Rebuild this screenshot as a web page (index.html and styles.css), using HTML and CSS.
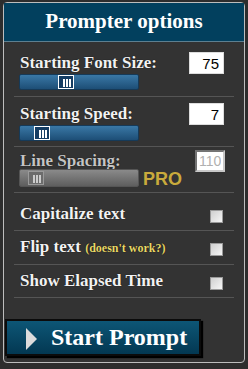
FILE: index.html
```html
<!DOCTYPE html>
<html lang="en">
  <head>
    <meta charset="UTF-8" />
    <meta name="viewport" content="width=device-width, initial-scale=1.0" />
    <title>Prompter options</title>
    <link rel="stylesheet" href="styles.css">
  </head>
  <body>
    <div class="panel">
      <div class="panel-title">Prompter options</div>

      <div class="option option-size">
        <div class="option-head">
          <label for="font-size">Starting Font Size:</label>
          <input class="num" id="font-size" value="75" />
        </div>
        <div class="slider"><span class="thumb" style="left: 38px"></span></div>
      </div>

      <div class="option option-speed">
        <div class="option-head">
          <label for="speed">Starting Speed:</label>
          <input class="num" id="speed" value="7" />
        </div>
        <div class="slider"><span class="thumb" style="left: 14px"></span></div>
      </div>

      <div class="option option-pro">
        <div class="option-head">
          <label for="spacing">Line Spacing:</label>
          <input class="num" id="spacing" value="110" disabled />
        </div>
        <div class="pro-line">
          <div class="slider slider-off"><span class="thumb" style="left: 8px"></span></div>
          <span class="pro">PRO</span>
        </div>
      </div>

      <div class="check-row check-first">
        <span class="check-label">Capitalize text</span>
        <span class="check"></span>
      </div>
      <div class="check-row">
        <span class="check-label">Flip text <small>(doesn't work?)</small></span>
        <span class="check"></span>
      </div>
      <div class="check-row">
        <span class="check-label">Show Elapsed Time</span>
        <span class="check"></span>
      </div>

      <button class="start" type="button"><span class="play"></span>Start Prompt</button>
    </div>
  </body>
</html>
```

FILE: styles.css
```css
body {
  margin: 0;
  background-color: #2d2d2d;
  font-family: "Liberation Serif", "Times New Roman", serif;
}
.panel {
  margin: 2px 3px 0 3px;
  height: 361px;
  box-sizing: border-box;
  border: 1px solid #bdbdbd;
  border-radius: 4px;
  background-color: #333;
}
.panel-title {
  height: 36px;
  padding-bottom: 2px;
  line-height: 36px;
  text-align: center;
  font-size: 21px;
  font-weight: bold;
  color: #fff;
  background-color: #02405e;
  border-bottom: 1px solid #5d7f90;
}
.option {
  margin: 0 10px;
  padding: 0 10px 0 5px;
  border-bottom: 1px solid #555;
}
.option-size {
  padding-top: 10px;
  padding-bottom: 6px;
}
.option-speed {
  padding-top: 6px;
  padding-bottom: 5px;
}
.option-pro {
  padding-top: 3px;
  padding-bottom: 5px;
}
.option-head {
  display: flex;
  justify-content: space-between;
  align-items: center;
  height: 22px;
}
.option-pro .option-head {
  margin-bottom: -3px;
}
label,
.check-label {
  padding-left: 1px;
  font-size: 17px;
  line-height: 20px;
  font-weight: bold;
  color: #f2f2f2;
  text-shadow: 0 0 1px #000;
}
.option-pro label {
  color: #c4c4c4;
}
.num {
  width: 35px;
  height: 22px;
  box-sizing: border-box;
  padding: 0 4px;
  border: 1px solid #ddd;
  background: #fff;
  font-family: "Liberation Sans", Arial, sans-serif;
  font-size: 15px;
  text-align: right;
  color: #000;
}
.num:disabled {
  width: 30px;
  margin-right: -1px;
  border: 2px inset #c8c8c8;
  padding: 0 2px;
  color: #b0b0b0;
  font-size: 14px;
}
.slider {
  position: relative;
  width: 120px;
  height: 16px;
  box-sizing: border-box;
  border: 1px solid #163a58;
  border-radius: 2px;
  background: linear-gradient(#3a78a6, #1d4e76);
}
.thumb {
  position: absolute;
  top: 0;
  width: 16px;
  height: 14px;
  box-sizing: border-box;
  border: 1px solid #fff;
  background:
    linear-gradient(#fff, #fff) 4px 3px / 2px 8px no-repeat,
    linear-gradient(#fff, #fff) 7px 3px / 2px 8px no-repeat,
    linear-gradient(#fff, #fff) 10px 3px / 2px 8px no-repeat,
    #153d63;
}
.pro-line {
  display: flex;
  align-items: flex-end;
}
.slider-off {
  height: 18px;
  border-color: #555;
  background: linear-gradient(#8a8a8a, #5e5e5e);
}
.slider-off .thumb {
  top: 1px;
  height: 14px;
  border-color: #9a9a9a;
  background:
    linear-gradient(#ccc, #ccc) 4px 3px / 2px 8px no-repeat,
    linear-gradient(#ccc, #ccc) 7px 3px / 2px 8px no-repeat,
    linear-gradient(#ccc, #ccc) 10px 3px / 2px 8px no-repeat,
    #6c6c6c;
}
.pro {
  margin-left: 4px;
  font-family: "Liberation Sans", Arial, sans-serif;
  font-size: 18px;
  line-height: 16px;
  font-weight: bold;
  color: #c9aa3c;
}
.check-row {
  display: flex;
  justify-content: space-between;
  align-items: flex-start;
  margin: 0 10px;
  padding: 6px 11px 6px 5px;
  border-bottom: 1px solid #555;
}
.check-first {
  padding-top: 11px;
}
.check-label small {
  font-size: 12px;
  color: #e8d868;
}
.check {
  width: 13px;
  height: 13px;
  margin-top: 6px;
  box-sizing: border-box;
  border: 1px solid #9a9a9a;
  background: linear-gradient(135deg, #cfcfcf, #f6f6f6);
}
.start {
  display: flex;
  align-items: center;
  width: 196px;
  height: 37px;
  margin: 21px 0 0 1px;
  padding: 0 0 0 19px;
  border: 2px solid #0b0b0b;
  box-shadow: 2px 2px 1px #000;
  background: linear-gradient(#0d5676, #033852);
  font-family: "Liberation Serif", "Times New Roman", serif;
  font-size: 24px;
  font-weight: bold;
  line-height: 33px;
  color: #fff;
  cursor: pointer;
}
.play {
  width: 0;
  height: 0;
  margin: 2px 14px 0 0;
  border-left: 11px solid #dcdcdc;
  border-top: 11px solid transparent;
  border-bottom: 11px solid transparent;
}
```
